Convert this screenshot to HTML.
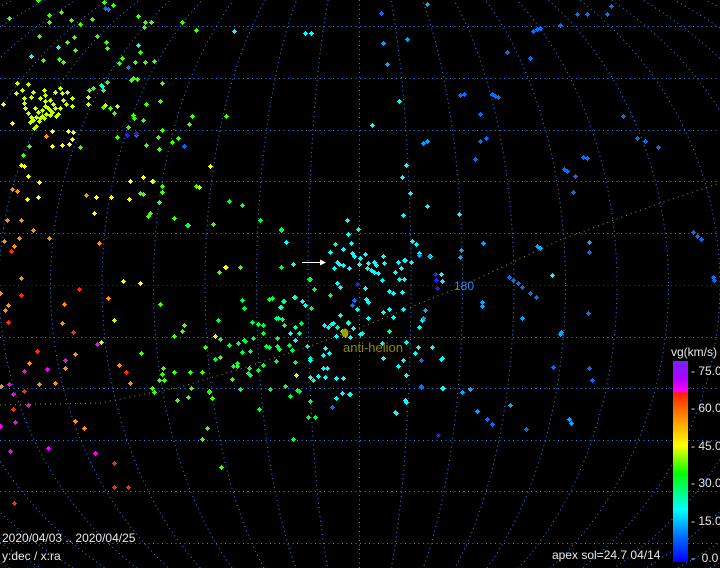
<!DOCTYPE html>
<html><head><meta charset="utf-8"><style>
html,body{margin:0;padding:0;background:#000;width:720px;height:568px;overflow:hidden;}
#w{position:relative;width:720px;height:568px;overflow:hidden;background:#000;font-family:"Liberation Sans",sans-serif;}
.t{position:absolute;color:#e8e8e8;font-size:12px;white-space:nowrap;line-height:12px;}
#cb{position:absolute;left:673px;top:361px;width:15px;height:201px;background:linear-gradient(to bottom,#7a20ff 0%,#b000ff 9%,#ff00ff 15%,#ff2000 16%,#ff7000 25%,#ffff00 42%,#00ff00 56%,#00ffff 74%,#0070ff 87%,#0000ff 100%);}
</style></head><body><div id="w">
<svg width="720" height="568" style="position:absolute;left:0;top:0">
<defs><g id="p"><rect x="-2" y="0" width="5" height="1"/><rect x="0" y="-2" width="1" height="5"/><rect x="-1" y="-1" width="3" height="3"/></g></defs>
<g fill="none" stroke="#1a8cff" stroke-width="1" stroke-dasharray="1 3.5">
<line x1="0" y1="26.5" x2="720" y2="26.5"/><line x1="0" y1="78.5" x2="720" y2="78.5"/><line x1="0" y1="130.5" x2="720" y2="130.5"/><line x1="0" y1="181.5" x2="720" y2="181.5"/><line x1="0" y1="233.5" x2="720" y2="233.5"/><line x1="0" y1="337.5" x2="720" y2="337.5"/><line x1="0" y1="388.5" x2="720" y2="388.5"/><line x1="0" y1="440.5" x2="720" y2="440.5"/><line x1="0" y1="491.5" x2="720" y2="491.5"/><line x1="0" y1="543.5" x2="720" y2="543.5"/>
<line x1="359.5" y1="0" x2="359.5" y2="568"/>
<ellipse cx="359.5" cy="285" rx="51.5" ry="360"/><ellipse cx="359.5" cy="285" rx="103" ry="360"/><ellipse cx="359.5" cy="285" rx="154.5" ry="360"/><ellipse cx="359.5" cy="285" rx="206" ry="360"/><ellipse cx="359.5" cy="285" rx="257.5" ry="360"/><ellipse cx="359.5" cy="285" rx="309" ry="360"/><ellipse cx="359.5" cy="285" rx="360.5" ry="360"/><ellipse cx="359.5" cy="285" rx="412" ry="360"/><ellipse cx="359.5" cy="285" rx="463.5" ry="360"/><ellipse cx="359.5" cy="285" rx="515" ry="360"/><ellipse cx="359.5" cy="285" rx="566.5" ry="360"/>
</g>
<line x1="0" y1="285.5" x2="720" y2="285.5" stroke="#c00000" stroke-dasharray="1 3.5"/>
<polyline fill="none" stroke="#9a9a00" stroke-dasharray="1 4" points="0,405 100,403 180,387 247,367 313,345 367,325 460,287 560,240 660,203 720,183"/>
<g fill="#40ff00"><use href="#p" x="38" y="0"/><use href="#p" x="104" y="2"/><use href="#p" x="113" y="5"/><use href="#p" x="9" y="18"/><use href="#p" x="49" y="15"/><use href="#p" x="61" y="12"/><use href="#p" x="71" y="20"/><use href="#p" x="92" y="19"/><use href="#p" x="49" y="22"/><use href="#p" x="80" y="24"/><use href="#p" x="138" y="16"/><use href="#p" x="145" y="22"/><use href="#p" x="151" y="22"/><use href="#p" x="144" y="27"/><use href="#p" x="182" y="22"/><use href="#p" x="196" y="30"/><use href="#p" x="39" y="36"/><use href="#p" x="74" y="37"/><use href="#p" x="67" y="42"/><use href="#p" x="97" y="36"/><use href="#p" x="106" y="42"/><use href="#p" x="107" y="48"/><use href="#p" x="75" y="50"/><use href="#p" x="59" y="59"/><use href="#p" x="43" y="60"/><use href="#p" x="63" y="62"/><use href="#p" x="122" y="58"/><use href="#p" x="119" y="63"/><use href="#p" x="140" y="52"/><use href="#p" x="135" y="62"/><use href="#p" x="145" y="62"/><use href="#p" x="154" y="61"/><use href="#p" x="137" y="79"/><use href="#p" x="133" y="78"/><use href="#p" x="101" y="85"/><use href="#p" x="103" y="90"/><use href="#p" x="107" y="82"/><use href="#p" x="89" y="90"/><use href="#p" x="93" y="88"/><use href="#p" x="146" y="104"/><use href="#p" x="160" y="101"/><use href="#p" x="134" y="118"/><use href="#p" x="128" y="127"/><use href="#p" x="143" y="120"/><use href="#p" x="133" y="115"/><use href="#p" x="158" y="137"/><use href="#p" x="178" y="138"/><use href="#p" x="172" y="142"/><use href="#p" x="162" y="130"/><use href="#p" x="146" y="145"/><use href="#p" x="159" y="149"/><use href="#p" x="189" y="124"/><use href="#p" x="192" y="116"/><use href="#p" x="226" y="116"/><use href="#p" x="196" y="186"/><use href="#p" x="23" y="155"/><use href="#p" x="29" y="146"/><use href="#p" x="80" y="147"/><use href="#p" x="110" y="108"/><use href="#p" x="114" y="113"/><use href="#p" x="103" y="107"/><use href="#p" x="162" y="83"/><use href="#p" x="131" y="80"/><use href="#p" x="117" y="137"/>
<use href="#p" x="140" y="193"/><use href="#p" x="143" y="194"/><use href="#p" x="153" y="181"/><use href="#p" x="162" y="186"/><use href="#p" x="162" y="192"/><use href="#p" x="159" y="202"/><use href="#p" x="150" y="213"/><use href="#p" x="148" y="216"/><use href="#p" x="174" y="218"/><use href="#p" x="188" y="225"/><use href="#p" x="213" y="224"/><use href="#p" x="160" y="304"/><use href="#p" x="174" y="336"/><use href="#p" x="182" y="331"/><use href="#p" x="184" y="325"/><use href="#p" x="141" y="353"/><use href="#p" x="163" y="368"/><use href="#p" x="162" y="374"/><use href="#p" x="164" y="380"/><use href="#p" x="159" y="380"/><use href="#p" x="152" y="388"/><use href="#p" x="154" y="392"/><use href="#p" x="177" y="400"/><use href="#p" x="188" y="397"/><use href="#p" x="191" y="388"/><use href="#p" x="174" y="372"/><use href="#p" x="190" y="372"/><use href="#p" x="202" y="372"/><use href="#p" x="205" y="347"/><use href="#p" x="209" y="391"/><use href="#p" x="212" y="398"/><use href="#p" x="207" y="428"/><use href="#p" x="202" y="439"/><use href="#p" x="221" y="467"/><use href="#p" x="220" y="357"/><use href="#p" x="232" y="379"/><use href="#p" x="237" y="366"/><use href="#p" x="233" y="366"/><use href="#p" x="219" y="272"/><use href="#p" x="240" y="267"/><use href="#p" x="226" y="267"/></g>
<g fill="#c8ff00"><use href="#p" x="16" y="93"/><use href="#p" x="22" y="90"/><use href="#p" x="33" y="92"/><use href="#p" x="45" y="95"/><use href="#p" x="55" y="92"/><use href="#p" x="62" y="93"/><use href="#p" x="24" y="98"/><use href="#p" x="31" y="97"/><use href="#p" x="24" y="103"/><use href="#p" x="40" y="98"/><use href="#p" x="45" y="101"/><use href="#p" x="50" y="100"/><use href="#p" x="63" y="100"/><use href="#p" x="72" y="98"/><use href="#p" x="66" y="104"/><use href="#p" x="72" y="106"/><use href="#p" x="60" y="108"/><use href="#p" x="35" y="108"/><use href="#p" x="38" y="112"/><use href="#p" x="42" y="110"/><use href="#p" x="45" y="106"/><use href="#p" x="48" y="108"/><use href="#p" x="50" y="110"/><use href="#p" x="52" y="112"/><use href="#p" x="55" y="108"/><use href="#p" x="53" y="104"/><use href="#p" x="46" y="114"/><use href="#p" x="42" y="116"/><use href="#p" x="40" y="118"/><use href="#p" x="36" y="117"/><use href="#p" x="33" y="120"/><use href="#p" x="30" y="122"/><use href="#p" x="34" y="128"/><use href="#p" x="36" y="126"/><use href="#p" x="39" y="121"/><use href="#p" x="44" y="118"/><use href="#p" x="50" y="115"/><use href="#p" x="58" y="114"/><use href="#p" x="56" y="116"/><use href="#p" x="25" y="108"/><use href="#p" x="28" y="113"/><use href="#p" x="31" y="117"/><use href="#p" x="17" y="83"/><use href="#p" x="28" y="84"/><use href="#p" x="44" y="90"/><use href="#p" x="60" y="88"/><use href="#p" x="67" y="92"/><use href="#p" x="88" y="104"/><use href="#p" x="105" y="105"/><use href="#p" x="117" y="106"/><use href="#p" x="88" y="97"/><use href="#p" x="199" y="187"/><use href="#p" x="101" y="342"/><use href="#p" x="114" y="320"/><use href="#p" x="215" y="336"/><use href="#p" x="296" y="375"/></g>
<g fill="#ffff00"><use href="#p" x="3" y="104"/><use href="#p" x="12" y="123"/><use href="#p" x="52" y="131"/><use href="#p" x="68" y="131"/><use href="#p" x="72" y="139"/><use href="#p" x="73" y="132"/><use href="#p" x="62" y="145"/><use href="#p" x="69" y="144"/><use href="#p" x="52" y="146"/><use href="#p" x="21" y="165"/><use href="#p" x="24" y="166"/><use href="#p" x="28" y="176"/><use href="#p" x="39" y="182"/><use href="#p" x="111" y="197"/><use href="#p" x="96" y="197"/><use href="#p" x="152" y="181"/><use href="#p" x="130" y="181"/><use href="#p" x="143" y="177"/><use href="#p" x="210" y="166"/><use href="#p" x="129" y="199"/><use href="#p" x="94" y="213"/><use href="#p" x="38" y="197"/><use href="#p" x="27" y="199"/><use href="#p" x="140" y="283"/><use href="#p" x="225" y="267"/><use href="#p" x="123" y="281"/></g>
<g fill="#ff9000"><use href="#p" x="46" y="136"/><use href="#p" x="86" y="195"/><use href="#p" x="12" y="189"/><use href="#p" x="17" y="191"/><use href="#p" x="7" y="220"/><use href="#p" x="21" y="220"/><use href="#p" x="33" y="230"/><use href="#p" x="49" y="238"/><use href="#p" x="19" y="238"/><use href="#p" x="4" y="241"/><use href="#p" x="14" y="246"/><use href="#p" x="21" y="278"/><use href="#p" x="99" y="243"/><use href="#p" x="0" y="293"/><use href="#p" x="8" y="305"/><use href="#p" x="5" y="310"/><use href="#p" x="64" y="304"/><use href="#p" x="108" y="298"/><use href="#p" x="62" y="323"/><use href="#p" x="75" y="354"/><use href="#p" x="29" y="363"/><use href="#p" x="65" y="368"/><use href="#p" x="119" y="365"/><use href="#p" x="130" y="383"/><use href="#p" x="55" y="383"/><use href="#p" x="39" y="384"/><use href="#p" x="1" y="386"/><use href="#p" x="75" y="421"/><use href="#p" x="84" y="428"/></g>
<g fill="#ff3000"><use href="#p" x="11" y="251"/><use href="#p" x="79" y="289"/><use href="#p" x="21" y="295"/><use href="#p" x="8" y="322"/><use href="#p" x="73" y="332"/><use href="#p" x="37" y="351"/><use href="#p" x="126" y="372"/><use href="#p" x="24" y="391"/><use href="#p" x="13" y="409"/><use href="#p" x="114" y="463"/><use href="#p" x="114" y="487"/><use href="#p" x="128" y="487"/><use href="#p" x="14" y="503"/></g>
<g fill="#ff00ff"><use href="#p" x="65" y="360"/><use href="#p" x="47" y="369"/><use href="#p" x="24" y="371"/><use href="#p" x="9" y="384"/><use href="#p" x="13" y="394"/><use href="#p" x="28" y="405"/><use href="#p" x="0" y="426"/><use href="#p" x="15" y="422"/><use href="#p" x="10" y="451"/><use href="#p" x="48" y="448"/><use href="#p" x="95" y="453"/><use href="#p" x="97" y="344"/></g>
<g fill="#00ff40"><use href="#p" x="242" y="205"/><use href="#p" x="229" y="201"/><use href="#p" x="260" y="220"/><use href="#p" x="281" y="230"/><use href="#p" x="286" y="242"/><use href="#p" x="281" y="267"/><use href="#p" x="293" y="264"/><use href="#p" x="309" y="279"/><use href="#p" x="314" y="289"/><use href="#p" x="242" y="300"/><use href="#p" x="244" y="308"/><use href="#p" x="269" y="299"/><use href="#p" x="272" y="298"/><use href="#p" x="284" y="301"/><use href="#p" x="295" y="297"/><use href="#p" x="302" y="301"/><use href="#p" x="311" y="308"/><use href="#p" x="281" y="307"/><use href="#p" x="218" y="320"/><use href="#p" x="252" y="322"/><use href="#p" x="258" y="324"/><use href="#p" x="263" y="325"/><use href="#p" x="276" y="318"/><use href="#p" x="282" y="319"/><use href="#p" x="284" y="325"/><use href="#p" x="301" y="323"/><use href="#p" x="290" y="333"/><use href="#p" x="277" y="338"/><use href="#p" x="266" y="346"/><use href="#p" x="269" y="347"/><use href="#p" x="277" y="346"/><use href="#p" x="279" y="349"/><use href="#p" x="292" y="350"/><use href="#p" x="307" y="346"/><use href="#p" x="253" y="338"/><use href="#p" x="245" y="341"/><use href="#p" x="238" y="343"/><use href="#p" x="229" y="345"/><use href="#p" x="220" y="339"/><use href="#p" x="242" y="352"/><use href="#p" x="250" y="351"/><use href="#p" x="237" y="363"/><use href="#p" x="233" y="366"/><use href="#p" x="263" y="365"/><use href="#p" x="258" y="370"/><use href="#p" x="248" y="373"/><use href="#p" x="249" y="368"/><use href="#p" x="250" y="375"/><use href="#p" x="276" y="361"/><use href="#p" x="295" y="362"/><use href="#p" x="215" y="359"/><use href="#p" x="240" y="389"/><use href="#p" x="270" y="389"/><use href="#p" x="290" y="396"/><use href="#p" x="297" y="390"/><use href="#p" x="310" y="401"/><use href="#p" x="308" y="417"/><use href="#p" x="315" y="417"/><use href="#p" x="259" y="409"/><use href="#p" x="293" y="439"/><use href="#p" x="187" y="225"/><use href="#p" x="281" y="229"/><use href="#p" x="310" y="279"/><use href="#p" x="330" y="295"/><use href="#p" x="311" y="308"/><use href="#p" x="263" y="333"/><use href="#p" x="289" y="345"/><use href="#p" x="244" y="340"/><use href="#p" x="209" y="392"/><use href="#p" x="285" y="386"/><use href="#p" x="299" y="391"/></g>
<g fill="#00ffa0"><use href="#p" x="331" y="324"/><use href="#p" x="337" y="327"/><use href="#p" x="348" y="322"/><use href="#p" x="362" y="333"/><use href="#p" x="389" y="331"/><use href="#p" x="349" y="394"/><use href="#p" x="310" y="358"/><use href="#p" x="313" y="380"/><use href="#p" x="335" y="244"/><use href="#p" x="283" y="301"/><use href="#p" x="278" y="318"/><use href="#p" x="295" y="327"/><use href="#p" x="299" y="333"/><use href="#p" x="307" y="346"/></g>
<g fill="#00ffff"><use href="#p" x="347" y="220"/><use href="#p" x="358" y="229"/><use href="#p" x="348" y="234"/><use href="#p" x="351" y="243"/><use href="#p" x="343" y="249"/><use href="#p" x="330" y="252"/><use href="#p" x="337" y="262"/><use href="#p" x="339" y="264"/><use href="#p" x="343" y="265"/><use href="#p" x="334" y="268"/><use href="#p" x="349" y="268"/><use href="#p" x="352" y="253"/><use href="#p" x="354" y="256"/><use href="#p" x="360" y="258"/><use href="#p" x="365" y="254"/><use href="#p" x="359" y="264"/><use href="#p" x="368" y="263"/><use href="#p" x="367" y="268"/><use href="#p" x="371" y="270"/><use href="#p" x="374" y="262"/><use href="#p" x="376" y="265"/><use href="#p" x="378" y="273"/><use href="#p" x="382" y="280"/><use href="#p" x="374" y="272"/><use href="#p" x="383" y="256"/><use href="#p" x="384" y="263"/><use href="#p" x="395" y="272"/><use href="#p" x="398" y="262"/><use href="#p" x="404" y="260"/><use href="#p" x="411" y="262"/><use href="#p" x="401" y="268"/><use href="#p" x="399" y="279"/><use href="#p" x="404" y="279"/><use href="#p" x="412" y="241"/><use href="#p" x="416" y="244"/><use href="#p" x="419" y="253"/><use href="#p" x="430" y="256"/><use href="#p" x="441" y="274"/><use href="#p" x="442" y="281"/><use href="#p" x="337" y="283"/><use href="#p" x="340" y="287"/><use href="#p" x="365" y="288"/><use href="#p" x="389" y="291"/><use href="#p" x="393" y="293"/><use href="#p" x="402" y="292"/><use href="#p" x="366" y="299"/><use href="#p" x="368" y="302"/><use href="#p" x="357" y="309"/><use href="#p" x="383" y="312"/><use href="#p" x="389" y="309"/><use href="#p" x="403" y="309"/><use href="#p" x="393" y="317"/><use href="#p" x="425" y="310"/><use href="#p" x="423" y="318"/><use href="#p" x="422" y="320"/><use href="#p" x="419" y="327"/><use href="#p" x="368" y="318"/><use href="#p" x="353" y="328"/><use href="#p" x="348" y="323"/><use href="#p" x="340" y="315"/><use href="#p" x="342" y="331"/><use href="#p" x="336" y="336"/><use href="#p" x="345" y="335"/><use href="#p" x="350" y="337"/><use href="#p" x="360" y="334"/><use href="#p" x="324" y="325"/><use href="#p" x="328" y="327"/><use href="#p" x="333" y="323"/><use href="#p" x="325" y="348"/><use href="#p" x="329" y="353"/><use href="#p" x="323" y="355"/><use href="#p" x="318" y="376"/><use href="#p" x="323" y="368"/><use href="#p" x="327" y="368"/><use href="#p" x="325" y="377"/><use href="#p" x="336" y="378"/><use href="#p" x="343" y="378"/><use href="#p" x="342" y="393"/><use href="#p" x="350" y="394"/><use href="#p" x="336" y="398"/><use href="#p" x="382" y="343"/><use href="#p" x="406" y="342"/><use href="#p" x="418" y="347"/><use href="#p" x="432" y="347"/><use href="#p" x="415" y="353"/><use href="#p" x="383" y="358"/><use href="#p" x="398" y="366"/><use href="#p" x="403" y="360"/><use href="#p" x="406" y="375"/><use href="#p" x="442" y="358"/><use href="#p" x="443" y="388"/><use href="#p" x="405" y="400"/><use href="#p" x="396" y="413"/><use href="#p" x="310" y="360"/><use href="#p" x="310" y="377"/><use href="#p" x="295" y="340"/><use href="#p" x="290" y="333"/><use href="#p" x="294" y="297"/><use href="#p" x="302" y="301"/><use href="#p" x="305" y="305"/><use href="#p" x="280" y="307"/><use href="#p" x="286" y="242"/><use href="#p" x="293" y="264"/><use href="#p" x="58" y="47"/><use href="#p" x="31" y="56"/><use href="#p" x="138" y="45"/><use href="#p" x="102" y="86"/><use href="#p" x="234" y="31"/><use href="#p" x="305" y="33"/><use href="#p" x="311" y="33"/><use href="#p" x="441" y="359"/><use href="#p" x="442" y="388"/><use href="#p" x="406" y="402"/><use href="#p" x="395" y="412"/><use href="#p" x="552" y="275"/><use href="#p" x="372" y="125"/><use href="#p" x="399" y="101"/><use href="#p" x="402" y="177"/><use href="#p" x="427" y="206"/><use href="#p" x="403" y="215"/><use href="#p" x="412" y="241"/><use href="#p" x="405" y="260"/><use href="#p" x="406" y="165"/><use href="#p" x="410" y="193"/><use href="#p" x="459" y="214"/></g>
<g fill="#00a8ff"><use href="#p" x="427" y="4"/><use href="#p" x="407" y="39"/><use href="#p" x="383" y="43"/><use href="#p" x="387" y="64"/><use href="#p" x="423" y="143"/><use href="#p" x="427" y="141"/><use href="#p" x="419" y="255"/><use href="#p" x="429" y="256"/><use href="#p" x="461" y="250"/><use href="#p" x="460" y="257"/><use href="#p" x="483" y="243"/><use href="#p" x="537" y="246"/><use href="#p" x="540" y="248"/><use href="#p" x="589" y="242"/><use href="#p" x="462" y="392"/><use href="#p" x="470" y="389"/><use href="#p" x="477" y="411"/><use href="#p" x="569" y="419"/><use href="#p" x="571" y="423"/><use href="#p" x="510" y="405"/><use href="#p" x="561" y="332"/><use href="#p" x="560" y="334"/><use href="#p" x="522" y="318"/><use href="#p" x="482" y="302"/><use href="#p" x="482" y="306"/><use href="#p" x="425" y="310"/><use href="#p" x="423" y="318"/></g>
<g fill="#0070ff"><use href="#p" x="381" y="13"/><use href="#p" x="577" y="14"/><use href="#p" x="587" y="14"/><use href="#p" x="607" y="14"/><use href="#p" x="611" y="6"/><use href="#p" x="560" y="25"/><use href="#p" x="533" y="31"/><use href="#p" x="537" y="29"/><use href="#p" x="540" y="28"/><use href="#p" x="507" y="52"/><use href="#p" x="530" y="58"/><use href="#p" x="460" y="95"/><use href="#p" x="464" y="94"/><use href="#p" x="492" y="94"/><use href="#p" x="495" y="96"/><use href="#p" x="498" y="97"/><use href="#p" x="480" y="114"/><use href="#p" x="623" y="116"/><use href="#p" x="480" y="141"/><use href="#p" x="486" y="138"/><use href="#p" x="637" y="138"/><use href="#p" x="645" y="141"/><use href="#p" x="658" y="147"/><use href="#p" x="475" y="159"/><use href="#p" x="583" y="157"/><use href="#p" x="587" y="158"/><use href="#p" x="564" y="169"/><use href="#p" x="567" y="171"/><use href="#p" x="575" y="176"/><use href="#p" x="573" y="192"/><use href="#p" x="693" y="232"/><use href="#p" x="697" y="236"/><use href="#p" x="701" y="239"/><use href="#p" x="589" y="252"/><use href="#p" x="713" y="277"/><use href="#p" x="714" y="280"/><use href="#p" x="509" y="277"/><use href="#p" x="513" y="280"/><use href="#p" x="518" y="283"/><use href="#p" x="522" y="287"/><use href="#p" x="530" y="293"/><use href="#p" x="536" y="297"/><use href="#p" x="588" y="313"/><use href="#p" x="553" y="367"/><use href="#p" x="589" y="368"/><use href="#p" x="592" y="380"/><use href="#p" x="487" y="419"/><use href="#p" x="492" y="424"/><use href="#p" x="526" y="429"/><use href="#p" x="108" y="9"/><use href="#p" x="105" y="8"/><use href="#p" x="128" y="67"/><use href="#p" x="136" y="135"/><use href="#p" x="184" y="146"/><use href="#p" x="354" y="300"/><use href="#p" x="352" y="305"/><use href="#p" x="421" y="386"/><use href="#p" x="332" y="407"/><use href="#p" x="421" y="360"/><use href="#p" x="421" y="387"/></g>
<g fill="#2020ff"><use href="#p" x="435" y="274"/><use href="#p" x="436" y="280"/><use href="#p" x="437" y="288"/><use href="#p" x="357" y="284"/><use href="#p" x="438" y="435"/><use href="#p" x="136" y="133"/><use href="#p" x="127" y="135"/><use href="#p" x="681" y="380"/></g>
<ellipse cx="345" cy="333" rx="3.5" ry="4.5" fill="#a0a000"/>
<line x1="302" y1="262.5" x2="322" y2="262.5" stroke="#fff" stroke-width="1"/>
<path d="M320,259.5 L326,262.5 L320,265.5 Z" fill="#fff"/>
</svg>
<div class="t" style="left:454px;top:280px;color:#1a8cff;">180</div>
<div class="t" style="left:343px;top:342px;color:#8a8a00;font-size:13px;">anti-helion</div>
<div class="t" style="left:2px;top:532px;">2020/04/03 .. 2020/04/25</div>
<div class="t" style="left:2px;top:550px;">y:dec / x:ra</div>
<div class="t" style="left:552px;top:549px;">apex sol=24.7 04/14</div>
<div class="t" style="left:671px;top:346px;">vg(km/s)</div>
<div id="cb"></div>
<div class="t" style="left:691px;top:365px;">- 75.0</div>
<div class="t" style="left:691px;top:402px;">- 60.0</div>
<div class="t" style="left:691px;top:440px;">- 45.0</div>
<div class="t" style="left:691px;top:477px;">- 30.0</div>
<div class="t" style="left:691px;top:515px;">- 15.0</div>
<div class="t" style="left:691px;top:552px;">-&nbsp; 0.0</div>
</div></body></html>
